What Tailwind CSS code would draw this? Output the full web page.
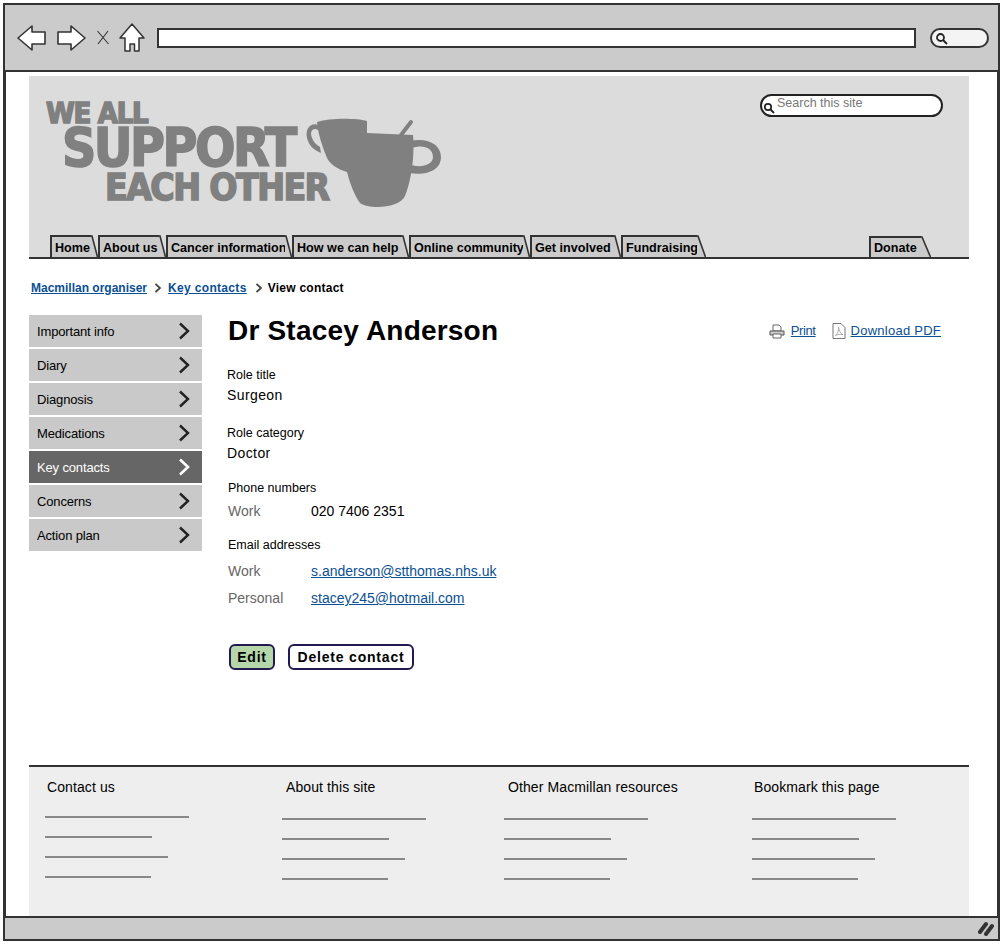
<!DOCTYPE html>
<html lang="en">
  <head>
    <meta charset="UTF-8" />
    <meta name="viewport" content="width=device-width, initial-scale=1.0" />
    <title>View contact</title>
    <script src="https://cdn.jsdelivr.net/npm/@tailwindcss/browser@4"></script>
  </head>
  <body class="bg-white">
    <div class="flex flex-col w-[1003px] h-[944px] p-[3px] font-['Liberation_Sans',Arial,sans-serif] text-black overflow-hidden">
      <!-- browser toolbar -->
      <div class="flex items-center h-[69px] shrink-0 bg-[#cbcbcb] border-2 border-[#333] pl-[11px]">
        <svg class="w-[32px] h-[28px] shrink-0" viewBox="0 0 32 28"><path d="M2 14 L16 2 L16 8 L29 8 L29 20 L16 20 L16 26 Z" fill="#fff" stroke="#333" stroke-width="1.6" stroke-linejoin="round"/></svg>
        <svg class="w-[32px] h-[28px] shrink-0 ml-[7px]" viewBox="0 0 32 28"><path d="M30 14 L16 2 L16 8 L3 8 L3 20 L16 20 L16 26 Z" fill="#fff" stroke="#333" stroke-width="1.6" stroke-linejoin="round"/></svg>
        <svg class="w-[14px] h-[15px] shrink-0 ml-[9px]" viewBox="0 0 14 15"><path d="M1.5 1 L12.5 14 M12 1 L2 14" fill="none" stroke="#333" stroke-width="1.1"/></svg>
        <svg class="w-[26px] h-[30px] shrink-0 ml-[9px]" viewBox="0 0 26 30"><path d="M13 1 L25 15 L20 15 L20 28 L15.5 28 L15.5 21 L11 21 L11 28 L6 28 L6 15 L1 15 Z" fill="#fff" stroke="#333" stroke-width="1.5" stroke-linejoin="round"/></svg>
        <div class="w-[759px] h-[20px] ml-[12px] shrink-0 bg-white border-2 border-[#333]"></div>
        <div class="relative w-[59px] h-[20px] ml-[14px] shrink-0 bg-[#f4f4f4] border-2 border-[#333] rounded-full">
          <svg class="absolute left-[3px] top-[2px] w-[13px] h-[13px]" viewBox="0 0 13 13"><circle cx="5.5" cy="5.5" r="3.5" fill="none" stroke="#222" stroke-width="1.8"/><path d="M8 8 L12 12" stroke="#222" stroke-width="2"/></svg>
        </div>
      </div>

      <!-- page area -->
      <div class="flex-1 flex flex-col min-h-0 border-x-[3px] border-[#333] pl-[23px] pr-[28px] pt-[4px]">
        <header class="h-[183px] shrink-0 bg-[#dcdcdc] border-b-2 border-[#333] flex flex-col">
          <div class="relative h-[159px] shrink-0">
            <!-- logo -->
            <div class="pt-[24px] pl-[17px] font-['DejaVu_Sans_Condensed','DejaVu_Sans',sans-serif] font-bold text-[#808080] [-webkit-text-stroke:1.5px_#808080] [stroke-linejoin:round] whitespace-nowrap">
              <div class="text-[29px] h-[27px] leading-[27px] tracking-[-1.3px]">WE ALL</div>
              <div class="text-[53px] h-[42px] leading-[42px] ml-[16px] tracking-[-2.5px]">SUPPORT</div>
              <div class="text-[37px] h-[37px] leading-[37px] ml-[59px] tracking-[-1.6px]">EACH OTHER</div>
            </div>
            <svg class="absolute left-[276px] top-[40px] w-[138px] h-[92px]" viewBox="0 0 138 92">
              <path d="M12 6 C25 2 50 2 62 5 L62 17 L108 19 C110 40 106 65 100 80 C95 92 65 94 55 87 C50 80 45 68 42 56 C32 53 25 48 22 42 C17 30 13 18 12 6 Z" fill="#808080"/>
              <path d="M14 9 C6 6 0 12 2 22 C4 30 9 34 16 37 L15 31 C10 28 7 24 6 18 C6 13 10 12 13 14 Z" fill="#808080"/>
              <path d="M105 25 C122 21 136 28 136 41 C136 54 122 60 104 57 L106 49 C116 52 128 49 128 41 C128 32 118 28 107 32 Z" fill="#808080"/>
              <path d="M96 19 L106 6" stroke="#808080" stroke-width="4" stroke-linecap="round"/>
            </svg>
            <!-- site search -->
            <div class="absolute right-[26px] top-[18px] w-[183px] h-[23px] bg-white border-2 border-[#222] rounded-full pl-[15px] text-[12.5px] leading-[15px] text-[#777]">Search this site
              <svg class="absolute left-[1px] top-[6px] w-[12px] h-[12px]" viewBox="0 0 12 12"><circle cx="5" cy="5" r="3.2" fill="none" stroke="#222" stroke-width="1.7"/><path d="M7.5 7.5 L11 11" stroke="#222" stroke-width="1.8"/></svg>
            </div>
          </div>
          <!-- nav tabs -->
          <nav class="flex items-end h-[22px] pl-[21px] text-[12.6px] font-bold leading-[18px] whitespace-nowrap">
            <a class="flex"><span class="bg-[#cbcbcb] border-l-2 border-t-2 border-[#333] pl-[3px] pt-[2px] w-[41px]">Home</span><svg class="w-[7px] h-[22px]" viewBox="0 0 7 22"><path d="M0 0 L1 0 L7 22 L0 22 Z" fill="#cbcbcb"/><path d="M0 1 L1 1 L6.5 22" fill="none" stroke="#333" stroke-width="1.6"/></svg></a>
            <a class="flex"><span class="bg-[#cbcbcb] border-l-2 border-t-2 border-[#333] pl-[3px] pt-[2px] w-[61px]">About us</span><svg class="w-[7px] h-[22px]" viewBox="0 0 7 22"><path d="M0 0 L1 0 L7 22 L0 22 Z" fill="#cbcbcb"/><path d="M0 1 L1 1 L6.5 22" fill="none" stroke="#333" stroke-width="1.6"/></svg></a>
            <a class="flex"><span class="bg-[#cbcbcb] border-l-2 border-t-2 border-[#333] pl-[3px] pt-[2px] w-[119px]">Cancer information</span><svg class="w-[7px] h-[22px]" viewBox="0 0 7 22"><path d="M0 0 L1 0 L7 22 L0 22 Z" fill="#cbcbcb"/><path d="M0 1 L1 1 L6.5 22" fill="none" stroke="#333" stroke-width="1.6"/></svg></a>
            <a class="flex"><span class="bg-[#cbcbcb] border-l-2 border-t-2 border-[#333] pl-[3px] pt-[2px] w-[110px]">How we can help</span><svg class="w-[7px] h-[22px]" viewBox="0 0 7 22"><path d="M0 0 L1 0 L7 22 L0 22 Z" fill="#cbcbcb"/><path d="M0 1 L1 1 L6.5 22" fill="none" stroke="#333" stroke-width="1.6"/></svg></a>
            <a class="flex"><span class="bg-[#cbcbcb] border-l-2 border-t-2 border-[#333] pl-[3px] pt-[2px] w-[114px]">Online community</span><svg class="w-[7px] h-[22px]" viewBox="0 0 7 22"><path d="M0 0 L1 0 L7 22 L0 22 Z" fill="#cbcbcb"/><path d="M0 1 L1 1 L6.5 22" fill="none" stroke="#333" stroke-width="1.6"/></svg></a>
            <a class="flex"><span class="bg-[#cbcbcb] border-l-2 border-t-2 border-[#333] pl-[3px] pt-[2px] w-[84px]">Get involved</span><svg class="w-[7px] h-[22px]" viewBox="0 0 7 22"><path d="M0 0 L1 0 L7 22 L0 22 Z" fill="#cbcbcb"/><path d="M0 1 L1 1 L6.5 22" fill="none" stroke="#333" stroke-width="1.6"/></svg></a>
            <a class="flex"><span class="bg-[#cbcbcb] border-l-2 border-t-2 border-[#333] pl-[3px] pt-[2px] w-[76px]">Fundraising</span><svg class="w-[9px] h-[22px]" viewBox="0 0 9 22"><path d="M0 0 L1 0 L9 22 L0 22 Z" fill="#cbcbcb"/><path d="M0 1 L1 1 L8.5 22" fill="none" stroke="#333" stroke-width="1.6"/></svg></a>
            <a class="flex ml-[163px]"><span class="bg-[#cbcbcb] border-l-2 border-t-2 border-[#333] pl-[3px] pt-[1px] w-[52px]">Donate</span><svg class="w-[10px] h-[21px]" viewBox="0 0 10 21"><path d="M0 0 L1 0 L10 21 L0 21 Z" fill="#cbcbcb"/><path d="M0 1 L1 1 L9.5 21" fill="none" stroke="#333" stroke-width="1.6"/></svg></a>
          </nav>
        </header>

        <!-- breadcrumb -->
        <div class="flex items-center h-[16px] mt-[21px] pl-[2px] text-[12px] font-bold">
          <a class="text-[#0b4f94] underline">Macmillan organiser</a>
          <svg class="w-[8px] h-[10px] ml-[7px] mr-[6px]" viewBox="0 0 8 10"><path d="M1.5 1 L6 5 L1.5 9" fill="none" stroke="#444" stroke-width="1.7"/></svg>
          <a class="text-[#0b4f94] underline tracking-[0.33px]">Key contacts</a>
          <svg class="w-[8px] h-[10px] ml-[8px] mr-[5px]" viewBox="0 0 8 10"><path d="M1.5 1 L6 5 L1.5 9" fill="none" stroke="#444" stroke-width="1.7"/></svg>
          <span class="tracking-[0.25px]">View contact</span>
        </div>

        <div class="flex flex-1 min-h-0 mt-[19px]">
          <!-- side menu -->
          <ul class="flex flex-col gap-[2px] w-[173px] shrink-0 text-[13px] tracking-[-0.15px]">
            <li class="flex items-center justify-between h-[32px] pl-[8px] pr-[12px] bg-[#c9c9c9]"><span class="mt-[2px]">Important info</span><svg class="w-[12px] h-[18px]" viewBox="0 0 12 18"><path d="M2 1.5 L10 9 L2 16.5" fill="none" stroke="#222" stroke-width="2.4"/></svg></li>
            <li class="flex items-center justify-between h-[32px] pl-[8px] pr-[12px] bg-[#c9c9c9]"><span class="mt-[2px]">Diary</span><svg class="w-[12px] h-[18px]" viewBox="0 0 12 18"><path d="M2 1.5 L10 9 L2 16.5" fill="none" stroke="#222" stroke-width="2.4"/></svg></li>
            <li class="flex items-center justify-between h-[32px] pl-[8px] pr-[12px] bg-[#c9c9c9]"><span class="mt-[2px]">Diagnosis</span><svg class="w-[12px] h-[18px]" viewBox="0 0 12 18"><path d="M2 1.5 L10 9 L2 16.5" fill="none" stroke="#222" stroke-width="2.4"/></svg></li>
            <li class="flex items-center justify-between h-[32px] pl-[8px] pr-[12px] bg-[#c9c9c9]"><span class="mt-[2px]">Medications</span><svg class="w-[12px] h-[18px]" viewBox="0 0 12 18"><path d="M2 1.5 L10 9 L2 16.5" fill="none" stroke="#222" stroke-width="2.4"/></svg></li>
            <li class="flex items-center justify-between h-[32px] pl-[8px] pr-[12px] bg-[#666] text-white"><span class="mt-[2px]">Key contacts</span><svg class="w-[12px] h-[18px]" viewBox="0 0 12 18"><path d="M2 1.5 L10 9 L2 16.5" fill="none" stroke="#fff" stroke-width="2.6"/></svg></li>
            <li class="flex items-center justify-between h-[32px] pl-[8px] pr-[12px] bg-[#c9c9c9]"><span class="mt-[2px]">Concerns</span><svg class="w-[12px] h-[18px]" viewBox="0 0 12 18"><path d="M2 1.5 L10 9 L2 16.5" fill="none" stroke="#222" stroke-width="2.4"/></svg></li>
            <li class="flex items-center justify-between h-[32px] pl-[8px] pr-[12px] bg-[#c9c9c9]"><span class="mt-[2px]">Action plan</span><svg class="w-[12px] h-[18px]" viewBox="0 0 12 18"><path d="M2 1.5 L10 9 L2 16.5" fill="none" stroke="#222" stroke-width="2.4"/></svg></li>
          </ul>

          <!-- contact details -->
          <main class="flex-1 pl-[26px] pr-[28px]">
            <div class="flex items-center justify-between h-[32px]">
              <h1 class="text-[28px] font-bold leading-[32px] tracking-[0.2px]">Dr Stacey Anderson</h1>
              <div class="flex items-center text-[13px] text-[#0b4f94]">
                <svg class="w-[16px] h-[15px]" viewBox="0 0 16 15"><path d="M4 1 H10 L12 3 V7 H4 Z" fill="#fff" stroke="#666"/><path d="M1 7 H15 V11 H1 Z" fill="#ccc" stroke="#555"/><path d="M4 10 H12 V14 H4 Z" fill="#fff" stroke="#666"/></svg>
                <a class="underline ml-[6px] tracking-[-0.4px]">Print</a>
                <svg class="w-[14px] h-[16px] ml-[16px]" viewBox="0 0 14 16"><path d="M1 .5 H9 L13 4.5 V15.5 H1 Z" fill="#fff" stroke="#777"/><path d="M3.5 12.5 C6 10 7 6 6.5 4 C7 8 9 11 11 11.5 C8 11 5.5 11.5 3.5 12.5 Z" fill="none" stroke="#999" stroke-width=".8"/></svg>
                <a class="underline ml-[5px] tracking-[0.25px]">Download PDF</a>
              </div>
            </div>
            <div class="text-[12.5px] leading-[16px] mt-[20px] -ml-[1px]">Role title</div>
            <div class="text-[14px] leading-[18px] mt-[3px] -ml-[1px] tracking-[0.4px]">Surgeon</div>
            <div class="text-[12.5px] leading-[16px] mt-[21px] -ml-[1px]">Role category</div>
            <div class="text-[14px] leading-[18px] mt-[3px] -ml-[1px] tracking-[0.4px]">Doctor</div>
            <div class="text-[12.5px] leading-[16px] mt-[18px]">Phone numbers</div>
            <div class="flex text-[14px] leading-[18px] mt-[6px]"><span class="w-[83px] text-[#666]">Work</span><span>020 7406 2351</span></div>
            <div class="text-[12.5px] leading-[16px] mt-[17px]">Email addresses</div>
            <div class="flex text-[14px] leading-[18px] mt-[9px]"><span class="w-[83px] text-[#666]">Work</span><a class="text-[#0b4f94] underline">s.anderson@stthomas.nhs.uk</a></div>
            <div class="flex text-[14px] leading-[18px] mt-[9px]"><span class="w-[83px] text-[#666]">Personal</span><a class="text-[#0b4f94] underline">stacey245@hotmail.com</a></div>
            <div class="flex gap-[13px] mt-[37px] pl-[1px] text-[14px] font-bold tracking-[0.8px]">
              <button class="w-[46px] h-[26px] bg-[#b5d6a8] border-2 border-[#221a50] rounded-[6px]">Edit</button>
              <button class="w-[126px] h-[26px] bg-white border-2 border-[#221a50] rounded-[6px]">Delete contact</button>
            </div>
          </main>
        </div>

        <!-- footer -->
        <footer class="grid grid-cols-[239px_222px_246px_1fr] h-[151px] shrink-0 bg-[#eeeeee] border-t-2 border-[#333] pl-[18px] pt-[11px] text-[14px] leading-[18px] tracking-[0.1px]">
          <div>
            <div>Contact us</div>
            <div class="w-[144px] h-[2px] mt-[20px] -ml-[2px] bg-[#888]"></div>
            <div class="w-[107px] h-[2px] mt-[18px] -ml-[2px] bg-[#888]"></div>
            <div class="w-[123px] h-[2px] mt-[18px] -ml-[2px] bg-[#888]"></div>
            <div class="w-[106px] h-[2px] mt-[18px] -ml-[2px] bg-[#888]"></div>
          </div>
          <div>
            <div>About this site</div>
            <div class="w-[144px] h-[2px] mt-[22px] -ml-[4px] bg-[#888]"></div>
            <div class="w-[107px] h-[2px] mt-[18px] -ml-[4px] bg-[#888]"></div>
            <div class="w-[123px] h-[2px] mt-[18px] -ml-[4px] bg-[#888]"></div>
            <div class="w-[106px] h-[2px] mt-[18px] -ml-[4px] bg-[#888]"></div>
          </div>
          <div>
            <div>Other Macmillan resources</div>
            <div class="w-[144px] h-[2px] mt-[22px] -ml-[4px] bg-[#888]"></div>
            <div class="w-[107px] h-[2px] mt-[18px] -ml-[4px] bg-[#888]"></div>
            <div class="w-[123px] h-[2px] mt-[18px] -ml-[4px] bg-[#888]"></div>
            <div class="w-[106px] h-[2px] mt-[18px] -ml-[4px] bg-[#888]"></div>
          </div>
          <div>
            <div>Bookmark this page</div>
            <div class="w-[144px] h-[2px] mt-[22px] -ml-[2px] bg-[#888]"></div>
            <div class="w-[107px] h-[2px] mt-[18px] -ml-[2px] bg-[#888]"></div>
            <div class="w-[123px] h-[2px] mt-[18px] -ml-[2px] bg-[#888]"></div>
            <div class="w-[106px] h-[2px] mt-[18px] -ml-[2px] bg-[#888]"></div>
          </div>
        </footer>
      </div>

      <!-- status bar -->
      <div class="flex items-center justify-end h-[25px] shrink-0 bg-[#cbcbcb] border-2 border-[#333] pr-[4px]">
        <svg class="w-[16px] h-[15px]" viewBox="0 0 16 15"><path d="M2 11 L8 3 M8 13 L14 5" stroke="#333" stroke-width="4" stroke-linecap="round"/></svg>
      </div>
    </div>
  </body>
</html>
